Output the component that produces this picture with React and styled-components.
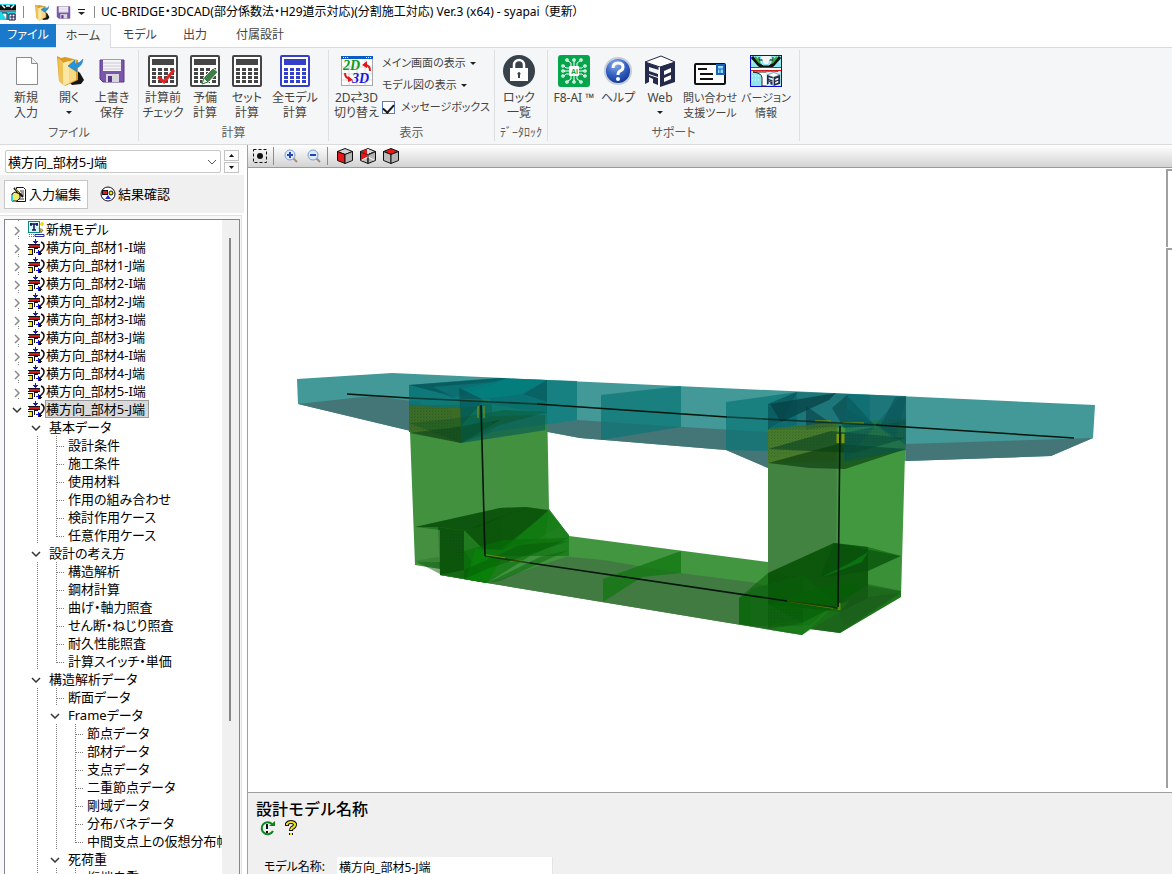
import React from "react";
import styled, { createGlobalStyle, css } from "styled-components";

const Global = createGlobalStyle`
  * { box-sizing: border-box; }
  body {
    margin: 0;
    background: #fff;
    color: #000;
    font-family: "Noto Sans", "Noto Sans CJK JP", sans-serif;
    font-size: 12px;
    line-height: 16px;
    font-feature-settings: "palt";
  }
  button, input, select { font: inherit; color: inherit; font-feature-settings: inherit; }
  svg { display: block; flex: none; }
`;

/* ---------- shell ---------- */
const Shell = styled.div`
  display: flex;
  flex-direction: column;
  height: 100vh;
  overflow: hidden;
`;
const TitleBar = styled.header`
  display: flex;
  align-items: center;
  height: 24px;
  flex: none;
  white-space: nowrap;
`;
const TitleRule = styled.i`
  width: 1px;
  height: 12px;
  background: #8a8a8a;
  margin: 0 6px;
`;
const QuickButton = styled.button`
  display: flex;
  align-items: center;
  justify-content: center;
  width: ${(p) => p.$w || 22}px;
  height: 20px;
  padding: 0;
  border: 0;
  background: none;
`;
const Title = styled.h1`
  margin: 0;
  font-size: 12px;
  font-weight: 400;
`;

/* ---------- ribbon ---------- */
const TabBar = styled.nav`
  display: flex;
  height: 24px;
  flex: none;
  border-bottom: 1px solid #dadbdc;
`;
const Tab = styled.button`
  height: 24px;
  padding: 0 0 2px;
  width: ${(p) => p.$w}px;
  border: 0;
  background: none;
  color: #444;
  ${(p) => p.$kind === "file" && css`
    height: 23px;
    background: #1979ca;
    color: #fff;
  `}
  ${(p) => p.$kind === "active" && css`
    background: #f5f6f7;
    border: solid #dadbdc;
    border-width: 1px 1px 0 0;
  `}
`;
const Ribbon = styled.section`
  display: flex;
  height: 97px;
  flex: none;
  background: #f5f6f7;
  border-bottom: 1px solid #dadbdc;
  color: #444;
`;
const Group = styled.div`
  display: flex;
  flex-direction: column;
  width: ${(p) => p.$w}px;
  margin: 2px 0 3px;
  border-right: 1px solid #dddfe1;
`;
const GroupBody = styled.div`
  display: flex;
  flex: 1;
  padding: 4px 0 0 ${(p) => p.$lead || 3}px;
`;
const GroupName = styled.div`
  height: 16px;
  line-height: 16px;
  text-align: center;
  color: #5c5c5c;
`;
const Tool = styled.button`
  display: flex;
  flex-direction: column;
  align-items: center;
  width: ${(p) => p.$w || 42}px;
  padding: 0;
  border: 0;
  background: none;
  font-size: ${(p) => (p.$compact ? 11 : 12)}px;
  line-height: 15px;
  white-space: nowrap;
`;
const ToolIcon = styled.span`
  display: flex;
  align-items: center;
  height: 34px;
  margin-bottom: 2px;
`;
const Caret = styled.i`
  width: 0;
  height: 0;
  margin-top: ${(p) => p.$top || 0}px;
  border: 3px solid transparent;
  border-top-color: #222;
  border-bottom: 0;
`;
const ViewOptions = styled.div`
  display: flex;
  flex-direction: column;
  padding-left: 2px;
  margin: -2px 0 0;
  font-size: 11px;
`;
const MenuLink = styled.button`
  display: flex;
  align-items: center;
  gap: 4px;
  height: 22px;
  padding: 0;
  border: 0;
  background: none;
  white-space: nowrap;
`;
const CheckLabel = styled.label`
  display: flex;
  align-items: center;
  gap: 6px;
  height: 22px;
  white-space: nowrap;
`;
const Check = styled.input`
  appearance: none;
  width: 13px;
  height: 13px;
  margin: 0;
  border: 1px solid #5a7bb5;
  background: #fff;
  display: grid;
  place-items: center;
  &:checked::after {
    content: "";
    width: 5px;
    height: 9px;
    margin-bottom: 2px;
    border: solid #1a1a1a;
    border-width: 0 2px 2px 0;
    transform: rotate(42deg);
  }
`;

/* ---------- work area ---------- */
const Work = styled.div`
  display: flex;
  flex: 1;
  min-height: 0;
`;
const Side = styled.aside`
  display: flex;
  flex-direction: column;
  width: 247px;
  flex: none;
  padding-right: 3px;
`;
const ModelPicker = styled.div`
  display: flex;
  gap: 3px;
  height: 30px;
  flex: none;
  padding: 5px 5px 2px;
  background: #fcfcfc;
`;
const Combo = styled.label`
  display: flex;
  align-items: center;
  flex: 1;
  border: 1px solid #c8c8c8;
  border-radius: 2px;
  background: #fff;
`;
const ComboSelect = styled.select`
  flex: 1;
  appearance: none;
  border: 0;
  padding: 0 2px;
  background: none;
  font-size: 13px;
  outline: 0;
`;
const Spin = styled.div`
  display: flex;
  flex-direction: column;
  gap: 1px;
  width: 15px;
`;
const SpinButton = styled.button`
  display: grid;
  place-items: center;
  flex: 1;
  padding: 0;
  border: 1px solid #c4c4c4;
  background: #fdfdfd;
`;
const ModeBar = styled.div`
  display: flex;
  height: 38px;
  flex: none;
  padding: 5px 4px 4px;
  gap: 5px;
  background: #f0f0f0;
`;
const Mode = styled.button`
  display: flex;
  align-items: center;
  gap: 2px;
  padding: 0 6px 2px;
  border: 1px solid ${(p) => (p.$on ? "#c6c6c6" : "transparent")};
  background: ${(p) => (p.$on ? "#fff" : "none")};
  font-size: 13px;
`;
const TreeFrame = styled.div`
  flex: 1;
  min-height: 0;
  display: flex;
  margin: 2px 2px 0 0;
  padding: 3px 1px 0 4px;
  border: solid #e0e0e4;
  border-width: 1px 1px 0 0;
  background: #f8f8f8;
`;
const TreeBox = styled.div`
  display: flex;
  flex: 1;
  min-width: 0;
  border: 1px solid #828790;
  border-bottom: 0;
  background: #fff;
`;
const TreeList = styled.ul`
  flex: 1;
  min-width: 0;
  margin: 0;
  padding: 0 0 0 4px;
  overflow: hidden;
  list-style: none;
  font-size: 13px;
`;
const TreeRow = styled.li`
  display: flex;
  align-items: center;
  height: 18px;
  white-space: nowrap;
`;
const Expander = styled.button`
  width: 19px;
  height: 18px;
  flex: none;
  padding: 0;
  border: 0;
  background: none;
`;
const TreeText = styled.span`
  height: 18px;
  line-height: 18px;
  padding-left: 2px;
  ${(p) => p.$root && css`padding-left: 1px;`}
  ${(p) => p.$selected && css`
    line-height: 16px;
    padding: 0 3px 0 0;
    border: 1px solid #999;
    background: #d9d9d9;
  `}
`;
const ScrollTrack = styled.div`
  width: 17px;
  flex: none;
  padding: 18px 8px 0 7px;
  background: #f0f0f0;
`;
const ScrollThumb = styled.div`
  width: 2px;
  height: 76%;
  background: #858585;
`;

const Main = styled.main`
  display: flex;
  flex-direction: column;
  flex: 1;
  min-width: 0;
  border-left: 1px solid #a0a0a0;
`;
const ViewBar = styled.div`
  display: flex;
  align-items: center;
  height: 23px;
  flex: none;
  border-bottom: 1px solid #9a9a9a;
  background: linear-gradient(#fff, #d3d3d3);
`;
const ViewButton = styled.button`
  display: grid;
  place-items: center;
  width: 23px;
  height: 20px;
  padding: 0;
  border: 0;
  background: none;
`;
const BarRule = styled.i`
  width: 1px;
  height: 18px;
  margin: 0 5px 0 2px;
  background: #8c8c8c;
`;
const Stage = styled.div`
  display: flex;
  flex: 1;
  min-height: 0;
`;
const Scene = styled.svg`
  flex: 1;
  min-width: 0;
  height: 100%;
`;
const Dock = styled.div`
  display: flex;
  flex-direction: column;
  gap: 1px;
  width: 6px;
  padding: 1px 0 4px;
`;
const DockPane = styled.div`
  height: ${(p) => p.$h || "auto"};
  flex: ${(p) => (p.$h ? "none" : 1)};
  border: solid #a0a0a0;
  border-width: 2px 0 0 2px;
`;
const Info = styled.section`
  height: 82px;
  flex: none;
  overflow: hidden;
  padding: 5px 8px 0;
  border-top: 1px solid #a0a0a0;
  background: #f0f0f0;
`;
const InfoTitle = styled.h2`
  margin: 0;
  font-size: 16px;
  line-height: 20px;
  font-weight: 500;
  font-family: "Noto Sans CJK JP", sans-serif;
  font-feature-settings: normal;
`;
const InfoTools = styled.div`
  display: flex;
  gap: 8px;
  padding: 2px 3px 0;
`;
const InfoButton = styled.button`
  padding: 0;
  border: 0;
  background: none;
`;
const Field = styled.div`
  display: flex;
  align-items: center;
  gap: 12px;
  margin: 20px 0 0 8px;
`;
const FieldInput = styled.input`
  width: 216px;
  height: 20px;
  padding: 0 2px;
  border: 0;
  border-right: 1px solid #e3e3e3;
  background: #fff;
`;

/* ---------- ribbon icons ---------- */
const PageIcon = () => (
  <svg width="32" height="32" viewBox="0 0 32 32">
    <path d="M6.500 2.500h15l6 6v21h-21z" fill="#fff" stroke="#8b8b8b" />
    <path d="M21.500 2.500v6h6" fill="#eee" stroke="#8b8b8b" />
  </svg>
);
const FolderIcon = ({ size = 32 }) => (
  <svg width={size} height={size} viewBox="0 0 32 32">
    <path d="M20 12l7 6 4 7-3 4-9 1-4-4z" fill="#151515" />
    <path d="M4 1l4 2 4-1 13 3v20l-13 6-6-5z" fill="#d99b25" />
    <path d="M5 3l5 4v23l-4-4z" fill="#eec257" />
    <path d="M10 8l13-4v21l-13 6z" fill="#f7d981" />
    <path d="M10 8l6-2v22l-6 3z" fill="#fbe7a4" />
    <path d="M30 4q-1 8-7 9l1 4-9-6 7-6v4q5-1 8-5z" fill="#2793d8" stroke="#1873b0" strokeWidth=".5" />
  </svg>
);
const DiskIcon = ({ size = 32 }) => (
  <svg width={size} height={size} viewBox="0 0 32 32">
    <path d="M4 5h24v22H7l-3-3z" fill="#7b56ab" stroke="#59398a" />
    <path d="M7 5h18v11H7z" fill="#f4f4f6" />
    <path d="M7 8h18M7 11h18M7 14h18" stroke="#c9c9d2" />
    <path d="M10 19h13v8H10z" fill="#d6d6dc" />
    <path d="M12 21h4v6h-4z" fill="#59398a" />
  </svg>
);
const CalcIcon = ({ color = "#454545", mark }) => {
  const keys = [];
  for (let r = 0; r < 4; r += 1)
    for (let c = 0; c < 4; c += 1)
      keys.push(<rect key={`${r}${c}`} x={5 + c * 6} y={13 + r * 4} width="4" height="3" fill={color} />);
  return (
    <svg width="32" height="32" viewBox="0 0 32 32">
      <rect x="2" y="1" width="28" height="30" rx="1" fill="#fff" stroke={color} strokeWidth="2" />
      <rect x="5" y="4" width="22" height="6" fill={color} />
      {keys}
      {mark === "check" && <path d="M11 22l6 5 10-12" fill="none" stroke="#e32224" strokeWidth="3" />}
      {mark === "pencil" && (
        <g>
          <path d="M13 29l2-7 9-9 5 4-9 10z" fill="#3d7d46" stroke="#fff" />
          <path d="M13 29l2-6 4 4z" fill="#f0f0e8" stroke="#3d7d46" />
        </g>
      )}
    </svg>
  );
};
const SwitchIcon = () => (
  <svg width="32" height="32" viewBox="0 0 32 32">
    <rect x="0.500" y="1.500" width="31" height="29" fill="#fff" stroke="#a8a8a8" />
    <path d="M8 5v25M16 5v25M24 5v25M1 12h30M1 19h30M1 25h30" stroke="#d8d8d8" />
    <rect x="0" y="1" width="32" height="3" fill="#0a5bc4" />
    <path d="M2 2.500h5M25 2.500h5" stroke="#fff" strokeDasharray="1 1" />
    <text x="2" y="15" fontFamily="Liberation Serif" fontStyle="italic" fontWeight="700" fontSize="14" fill="#0d9a1c">2D</text>
    <text x="11" y="28" fontFamily="Liberation Serif" fontStyle="italic" fontWeight="700" fontSize="14" fill="#1717e0">3D</text>
    <path d="M29 16q0-6-5-6M4 18q0 5 5 6" fill="none" stroke="#e01818" strokeWidth="2" />
    <path d="M21 10l5-4v7zM12 25l-5 2v-6z" fill="#e01818" />
  </svg>
);
const LockIcon = () => (
  <svg width="32" height="32" viewBox="0 0 32 32">
    <circle cx="16" cy="16" r="16" fill="#37424a" />
    <path d="M11 14v-4a5 5 0 0 1 10 0v4" fill="none" stroke="#fff" strokeWidth="2.500" />
    <rect x="7" y="13" width="18" height="13" fill="#fff" />
    <path d="M16 17a2 2 0 0 1 1 3v3h-2v-3a2 2 0 0 1 1-3z" fill="#37424a" />
  </svg>
);
const AiIcon = () => (
  <svg width="32" height="32" viewBox="0 0 32 32">
    <rect width="32" height="32" rx="3" fill="#04a54b" />
    <path d="M13 11V8l-3-2M16 11V6M19 11V8l3-2M13 21v3l-3 2M16 21v5M19 21v3l3 2M11 13H8l-2-2M11 16H6M11 19H8l-2 2M21 13h3l2-2M21 16h5M21 19h3l2 2" fill="none" stroke="#fff" />
    <g fill="none" stroke="#fff" strokeWidth="1.200">
      <circle cx="9" cy="5" r="1.200" /><circle cx="16" cy="5" r="1.200" /><circle cx="23" cy="5" r="1.200" />
      <circle cx="9" cy="27" r="1.200" /><circle cx="16" cy="27" r="1.200" /><circle cx="23" cy="27" r="1.200" />
      <circle cx="5" cy="11" r="1.200" /><circle cx="5" cy="16" r="1.200" /><circle cx="5" cy="21" r="1.200" />
      <circle cx="27" cy="11" r="1.200" /><circle cx="27" cy="16" r="1.200" /><circle cx="27" cy="21" r="1.200" />
    </g>
    <rect x="11" y="11" width="10" height="10" rx="1" fill="#fff" />
    <text x="13" y="19" fontFamily="Liberation Sans" fontWeight="700" fontSize="7" fill="#04a54b">AI</text>
  </svg>
);
const HelpIcon = () => (
  <svg width="32" height="32" viewBox="0 0 32 32">
    <defs>
      <radialGradient id="helpBall" cx=".4" cy=".25" r=".8">
        <stop offset="0" stopColor="#8fb0ee" />
        <stop offset=".5" stopColor="#3564c4" />
        <stop offset="1" stopColor="#0d2f8e" />
      </radialGradient>
    </defs>
    <circle cx="16" cy="16" r="13" fill="url(#helpBall)" stroke="#c5ccda" strokeWidth="2" />
    <path d="M11 13q0-5 5-5t5 4q0 3-3 4-2 1-2 4" fill="none" stroke="#fff" strokeWidth="3" />
    <circle cx="16" cy="24" r="2" fill="#fff" />
  </svg>
);
const CubeMark = () => (
  <g>
    <path d="M1 7L17 1l14 6-15 5z" fill="#fff" stroke="#252a4c" />
    <path d="M1 7l14 5v3L5 12v4l9 3v3l-9-3v8l-4 2z" fill="#252a4c" />
    <path d="M5 20l9 3v7l-5-2v-4l-4-2z" fill="#252a4c" />
    <path d="M16 12l15-5v20l-15 5z" fill="#252a4c" />
    <path d="M20 16l7-3v4l-7 3zM20 23l7-3v4l-7 3z" fill="#fff" />
    <path d="M15 12v18" stroke="#fff" />
  </g>
);
const WebIcon = () => (
  <svg width="32" height="32" viewBox="0 0 32 32"><CubeMark /></svg>
);
const CardIcon = () => (
  <svg width="32" height="32" viewBox="0 0 32 32">
    <rect x="1" y="9" width="30" height="20" rx="1" fill="#fff" stroke="#111" strokeWidth="2" />
    <path d="M4 14h9M6 19h13M6 24h13" stroke="#111" strokeWidth="2" />
    <rect x="23" y="10" width="7" height="9" fill="#8fdcff" stroke="#1b5fae" strokeWidth="2" />
    <path d="M23 14h7M26 14v5" stroke="#1b5fae" />
  </svg>
);
const BridgeArt = () => (
  <g>
    <rect x=".5" y=".5" width="31" height="31" fill="#8fe6ee" stroke="#0a0ad8" />
    <path d="M2 3h28M2 7h28M2 17h28M2 21h28M2 25h28" stroke="#fff" strokeDasharray="1 2" />
    <path d="M2 2l7 8 4 2h6l4-2 7-8" fill="none" stroke="#111" strokeWidth="3" />
    <path d="M9 2v6l4 3M23 2v6l-4 3M9 5h14" fill="none" stroke="#111" />
    <path d="M5 2l5 6M27 2l-5 6" stroke="#2fae35" strokeWidth="2" />
    <path d="M11 1h10l-3 8h-4z" fill="#f4f4f4" />
    <path d="M1 12h30v4H1z" fill="#fff" />
    <path d="M1 12.500h30M1 15.500h30" stroke="#d01818" />
    <path d="M3 17q9 1 9 6v8h6v-9q1-4 10-5z" fill="#fff" stroke="#222" />
  </g>
);
const VersionIcon = () => (
  <svg width="32" height="32" viewBox="0 0 32 32">
    <BridgeArt />
    <svg x="16" y="17" width="15" height="14" viewBox="0 0 32 32">
      <rect width="32" height="32" fill="#cfeff5" />
      <CubeMark />
    </svg>
  </svg>
);
const AppIcon = () => (
  <svg width="17" height="17" viewBox="0 0 17 17">
    <rect width="16" height="16" fill="#20d8e8" />
    <path d="M0 1h16v5H0z" fill="#111" />
    <path d="M2 1l3 3M14 1l-3 3M6 2h4" stroke="#fff" strokeWidth="1.500" />
    <path d="M0 7h16" stroke="#d02020" />
    <path d="M2 9h5v7M9 10h6v6H9z" fill="#fff" stroke="#141445" />
    <path d="M10 13h5M12 10v6" stroke="#141445" />
  </svg>
);

/* ---------- side icons ---------- */
const Chevron = ({ open }) => (
  <svg width="19" height="18" viewBox="0 0 19 18">
    {open ? (
      <path d="M4 8l4 4 4-4" fill="none" stroke="#333" strokeWidth="1.500" />
    ) : (
      <g fill="none">
        <path d="M9.500 0v18" stroke="#8a8a8a" strokeDasharray="1 3" />
        <rect x="4" y="3" width="10" height="13" fill="#fff" />
        <path d="M6 7l4 4-4 4" stroke="#8c8c8c" strokeWidth="1.500" />
      </g>
    )}
  </svg>
);
const Guide = ({ arm, last }) => (
  <svg width="19" height="18" viewBox="0 0 19 18">
    <path d={last ? "M9.500 0v11" : "M9.500 0v18"} stroke="#7c7c7c" strokeDasharray="1 1" />
    {arm && <path d="M10 10.500h7" stroke="#7c7c7c" strokeDasharray="1 1" />}
  </svg>
);
const MemberIcon = () => (
  <svg width="17" height="18" viewBox="0 0 17 18" shapeRendering="crispEdges">
    <path d="M0 6h12v1H0zM0 9h12v1H0z" fill="#111" />
    <path d="M1 7h11v2H1z" fill="#d81818" />
    <path d="M1 12h3v4H1z" fill="#f4ea1a" />
    <path d="M0 11h5v1H0zM0 16h5v1H0zM4 12h1v5H4zM6 10h1v5H6zM6 10h4v1H6z" fill="#111" />
    <path d="M7 1h1v5H7zM5 3h5v1H5zM6 4h3v1H6z" fill="#1616b0" />
    <path d="M10 12h1v5h-1zM8 14h5v1H8z" fill="#1616c8" />
    <path d="M13 4q3 1 3 4t-4 6" fill="none" stroke="#111" strokeWidth="1.500" shapeRendering="auto" />
    <path d="M11 13l3 3-3 1z" fill="#111" />
  </svg>
);
const NewModelIcon = () => (
  <svg width="17" height="18" viewBox="0 0 17 18">
    <rect x=".5" y="1.500" width="11" height="11" fill="#d9f6f6" stroke="#0c8585" />
    <path d="M2 4h8M6 4v6M3 3v3M9 3v3M4 10h4" stroke="#10105c" strokeWidth="1.500" />
    <path d="M14 2v4M12 4h4" stroke="#f0df20" strokeWidth="2" />
    <path d="M11 8l4 2-2 3z" fill="#cfc21a" stroke="#333" strokeWidth=".5" />
    <path d="M1 14.500h7M1 16.500h7" stroke="#777" strokeDasharray="1 1" />
    <path d="M7 14.500h9v2H7z" fill="#fff" stroke="#2b2ba0" />
  </svg>
);
const EditIcon = () => (
  <svg width="16" height="16" viewBox="0 0 16 16">
    <path d="M5.500 1.500h7l2 2v12h-9z" fill="#fff" stroke="#111" />
    <path d="M9 5h4M10 7h3M10 9h3M8 13h5" stroke="#333" />
    <path d="M1 8l3-2 5 2v4l-3 3H1z" fill="#f2ea68" stroke="#111" />
    <path d="M0 9h2v6H0z" fill="#26cfe0" />
    <path d="M3 2l9 9" stroke="#111" strokeWidth="2" />
    <path d="M4 2l4 5" stroke="#e0c020" />
  </svg>
);
const ResultIcon = () => (
  <svg width="16" height="16" viewBox="0 0 16 16">
    <circle cx="8" cy="8" r="7" fill="#fff" stroke="#111" />
    <rect x="2.500" y="4.500" width="5" height="4" fill="#e81818" stroke="#111" />
    <circle cx="11" cy="7" r="2" fill="#f2e81c" stroke="#111" />
    <path d="M8 9l3 4H5z" fill="#1c2ce0" />
  </svg>
);

/* ---------- view bar icons ---------- */
const FitIcon = () => (
  <svg width="16" height="16" viewBox="0 0 16 16">
    <rect x="1.500" y="1.500" width="13" height="13" fill="none" stroke="#111" strokeDasharray="3 2" />
    <circle cx="8" cy="8" r="3" fill="#111" />
  </svg>
);
const ZoomIcon = ({ plus }) => (
  <svg width="16" height="16" viewBox="0 0 16 16">
    <path d="M10 10l4 4" stroke="#a78c77" strokeWidth="2" />
    <circle cx="7" cy="7" r="5" fill="#dcecff" stroke="#7f9ed0" />
    <path d={plus ? "M4 7h6M7 4v6" : "M4 7h6"} stroke="#2c42b0" strokeWidth="2" />
  </svg>
);
const CubeIcon = ({ face }) => (
  <svg width="18" height="18" viewBox="0 0 18 18">
    <g stroke="#111" strokeLinejoin="round">
      <path d="M1.500 4.500L9 1.500l7.500 3L9 7.500z" fill={face === "top" ? "#e81616" : "#d4d4d4"} />
      <path d="M1.500 4.500L9 7.500v9l-7.500-3z" fill={face === "left" ? "#e81616" : "#bdbdbd"} />
      <path d="M16.500 4.500L9 7.500v9l7.500-3z" fill="#b4b4b4" />
    </g>
    {face === "inner" && (
      <g>
        <path d="M2 5l6-3v8l-6 3z" fill="#e81616" />
        <path d="M9 2v8l6 3M9 10l-6 3" stroke="#fff" fill="none" />
        <path d="M9 7v9M2 5l7 3 7-3" stroke="#333" fill="none" />
      </g>
    )}
  </svg>
);

/* ---------- bridge scene ---------- */
const shapes = [
  // deck body
  ["297,379 392,373 1095,405 1093,438 1051,456 906,461 835,468 768,468 726,450 580,438 548,432 461,443 298,404", "#439898"],
  ["298,404 372,396 420,402 461,443", "#447577"],
  ["906,444 1093,438 1051,456 906,461", "#447577"],
  ["492,431 577,420 683,427 768,432 768,468 726,450 580,438 548,432", "#447577"],
  ["601,395 681,386 681,427 601,440", "#0b7676", 0.72],
  ["726,402 797,392 797,425 768,432 768,451 726,450", "#0b7676", 0.72],
  // lower beam
  ["549,509 569,536 768,562 768,629 802,635 487,583 440,575 440,560", "#41963f"],
  ["440,560 560,556 603,560 680,573 757,583 802,600 802,635 487,583 440,575", "#417b41"],
  ["603,579 681,551 681,573 642,577 603,602", "#117511", 0.75],
  // left column
  ["409,405 547,402 549,509 569,536 569,556 487,583 440,575 440,569 415,565", "#41913f"],
  ["409,405 461,405 461,443 409,432", "#3d6c27"],
  ["480,403 500,402 502,560 484,553", "#438f41", 0.6],
  // right column
  ["768,429 906,418 901,597 840,633 810,629 802,635 768,626", "#42983f"],
  ["768,429 837,422 836,610 768,626", "#438342"],
  // left joint, deck part
  ["409,385 497,378 577,381 577,420 492,432 461,443 461,408 409,405", "#087878", 0.75],
  ["409,385 497,378 547,380 547,430 461,443 461,408 409,406", "#066d70", 0.4],
  ["409,385 506,378 497,382 433,387 455,397", "#064f53", 0.65],
  ["433,387 506,378 484,388 452,398", "#0a686b", 0.5],
  ["506,379 546,380 520,394 484,400 462,389", "#007f7f", 0.7],
  ["459,388 484,400 461,426", "#044c50", 0.6],
  ["547,380 547,402 523,394", "#07595c", 0.7],
  ["461,402 523,394 547,402 547,414 492,404 461,410", "#04686c", 0.45],
  ["461,430 491,416 545,415 545,430 520,434 461,443", "#125f49", 0.6],
  ["409,423 450,419 505,410 547,412 500,425 461,443", "#074c1c", 0.35],
  ["409,433 450,428 500,420 461,443", "#063d18", 0.5],
  ["461,408 492,404 492,432 461,443", "#0c6047", 0.45],
  // right joint, deck part
  ["768,404 797,392 906,396 906,425 768,430", "#066166", 0.62],
  ["768,404 797,392 783,420 768,429", "#073f43", 0.3],
  ["770,404 836,393 829,400 781,422", "#063e43", 0.7],
  ["806,406 835,426 806,430", "#074044", 0.6],
  ["832,408 847,395 875,426 844,428", "#05474a", 0.6],
  ["845,409 875,425 900,397 906,399 895,440 876,425 845,461", "#056266", 0.5],
  ["847,394 870,395 870,423 847,410", "#066a6e", 0.5],
  ["895,397 906,396 906,445 880,427", "#094c50", 0.5],
  ["768,429 837,422 837,461 768,463", "#4b7421", 0.65],
  ["768,449 831,431 906,438 855,453", "#073f20", 0.6],
  ["768,463 838,444 906,449 845,469 810,468", "#073c0c", 0.65],
  ["844,433 906,420 906,450 844,462", "#085251", 0.58],
  // left joint, beam part
  ["415,527 500,508 526,507 549,511 569,535 569,556 503,556 487,583 440,575 440,530", "#086c08", 0.6],
  ["415,527 500,508 526,507 480,526 464,531 440,527", "#064207", 0.65],
  ["465,531 526,507 549,510 503,550 483,549", "#034403", 0.65],
  ["438,527 464,531 464,570 440,575", "#033c03", 0.62],
  ["549,511 500,550 540,538 561,525", "#0b7a0b", 0.7],
  ["549,511 561,525 569,535 569,556 552,556 545,535", "#1e821e", 0.6],
  ["415,561 465,552 487,583 440,574", "#0c570c", 0.5],
  ["464,551 503,540 569,538 530,556 487,583 464,579", "#057005", 0.6],
  ["476,548 500,560 487,583 466,579", "#078707", 0.65],
  ["487,583 540,557 569,550 500,581", "#0a660a", 0.5],
  ["464,570 520,545 569,541 490,568 464,579", "#064f06", 0.35],
  ["415,527 440,530 440,562 415,562", "#478e43", 0.6],
  // right joint, beam part
  ["739,598 768,573 834,543 868,547 901,556 901,597 840,633 810,629 802,635 739,624", "#096309", 0.6],
  ["768,573 834,543 868,547 868,598 840,612 768,604", "#044804", 0.62],
  ["768,575 803,577 803,625 768,628", "#075307", 0.5],
  ["834,543 901,556 868,571 820,578", "#074f0b", 0.6],
  ["868,571 901,556 901,591 868,586", "#40963c", 0.8],
  ["751,589 803,575 835,603 810,625 751,626", "#086308", 0.45],
  ["739,598 751,591 751,626 739,624", "#0a670a", 0.7],
  ["768,604 836,583 868,586 803,623", "#046004", 0.55],
  ["810,629 840,600 901,593 840,633", "#164f17", 0.45],
  ["836,606 868,584 901,591 845,627", "#1b5b1b", 0.5],
  ["802,635 840,612 850,600 803,622 770,630", "#178017", 0.4],
  ["850,563 868,552 862,562 820,578", "#0b7b12", 0.8],
];
const grains = [
  ["409,405 450,408 461,443 409,428", 0.3],
  ["768,429 837,422 837,440 768,460", 0.25],
  ["845,425 906,418 906,440 845,445", 0.25],
  ["440,530 464,531 464,565 446,545", 0.25],
  ["768,608 803,610 803,628 768,622", 0.25],
];
const BridgeScene = () => (
  <Scene viewBox="248 168 918 624" role="img" aria-label="3D">
    <defs>
      <pattern id="grain" width="3" height="3" patternUnits="userSpaceOnUse">
        <rect width="1" height="1" fill="#0c3b1c" />
        <rect x="1" y="2" width="1" height="1" fill="#0c5b3c" />
      </pattern>
    </defs>
    {shapes.map(([points, fill, opacity = 1], i) => (
      <polygon key={i} points={points} fill={fill} fillOpacity={opacity} />
    ))}
    {grains.map(([points, opacity]) => (
      <polygon key={points} points={points} fill="url(#grain)" opacity={opacity} />
    ))}
    <g fill="none" stroke="#8c9a00" strokeWidth="1.500" opacity=".7">
      <path d="M478 406v12M484 406v12M485 555l20 3M510 561h12M815 421h16M842 423h22M787 601l46 7" />
      <path d="M460 400h30" opacity=".4" />
      <path d="M838 434v9M843 434v9" stroke="#a8b400" strokeWidth="3" />
      <path d="M839 603v7" strokeWidth="3" />
    </g>
    <g fill="none" stroke="#04160c" strokeWidth="1.600">
      <path d="M347 394l62 4M537 404l190 13M876 425l198 13" />
      <path d="M409 398l128 6M727 417l149 8" strokeOpacity=".6" />
      <path d="M481 405l4 151M840 426l-2 181" />
      <path d="M485 556l45 7M787 601l51 7" strokeOpacity=".6" />
      <path d="M530 563l257 38" />
    </g>
  </Scene>
);

/* ---------- data ---------- */
const member = (n, side) => ({ t: `横方向_部材${n}-${side}端`, d: 0 });
const tree = [
  { t: "新規モデル", d: 0, fresh: true },
  ...[1, 2, 3, 4, 5].flatMap((n) => [member(n, "I"), member(n, "J")]),
  { t: "基本データ", d: 1 },
  ...["設計条件", "施工条件", "使用材料", "作用の組み合わせ", "検討作用ケース", "任意作用ケース"].map((t) => ({ t, d: 2 })),
  { t: "設計の考え方", d: 1 },
  ...["構造解析", "鋼材計算", "曲げ・軸力照査", "せん断・ねじり照査", "耐久性能照査", "計算スイッチ・単価"].map((t) => ({ t, d: 2 })),
  { t: "構造解析データ", d: 1 },
  { t: "断面データ", d: 2 },
  { t: "Frameデータ", d: 2, open: true },
  ...["節点データ", "部材データ", "支点データ", "二重節点データ", "剛域データ", "分布バネデータ", "中間支点上の仮想分布幅"].map((t) => ({ t, d: 3 })),
  { t: "死荷重", d: 2, open: true },
  { t: "桁端自重", d: 3 },
];

const TreeItem = ({ item, next }) => {
  const { t, d, fresh, open } = item;
  const selected = t === "横方向_部材5-J端";
  const expandable = d < 2 || open;
  const cells = [];
  for (let i = 0; i < d; i += 1)
    cells.push(i === 0 ? <Expander as="span" key={i} /> : <Guide key={i} />);
  return (
    <TreeRow>
      {cells}
      {expandable ? (
        <Expander aria-label={t}><Chevron open={d > 0 || selected} /></Expander>
      ) : (
        <Guide arm last={!next || next.d < d} />
      )}
      {d === 0 && (fresh ? <NewModelIcon /> : <MemberIcon />)}
      <TreeText $root={d === 0} $selected={selected}>{t}</TreeText>
    </TreeRow>
  );
};

const RibbonTool = ({ icon, lines, w, caret, compact }) => (
  <Tool $w={w} $compact={compact}>
    <ToolIcon>{icon}</ToolIcon>
    {lines.map((line) => <span key={line}>{line}</span>)}
    {caret && <Caret $top={6} />}
  </Tool>
);

export default function App() {
  return (
    <Shell>
      <Global />
      <TitleBar>
        <AppIcon />
        <TitleRule />
        <QuickButton aria-label="開く"><FolderIcon size={17} /></QuickButton>
        <QuickButton aria-label="保存"><DiskIcon size={17} /></QuickButton>
        <QuickButton $w={14} aria-label="その他">
          <svg width="7" height="7" viewBox="0 0 7 7"><path d="M0 .5h7" stroke="#222" /><path d="M0 3h7L3.500 6z" fill="#222" /></svg>
        </QuickButton>
        <TitleRule />
        <Title>UC-BRIDGE・3DCAD(部分係数法・H29道示対応)(分割施工対応) Ver.3 (x64) - syapai （更新）</Title>
      </TitleBar>
      <TabBar>
        <Tab $w={56} $kind="file">ファイル</Tab>
        <Tab $w={55} $kind="active">ホーム</Tab>
        <Tab $w={58}>モデル</Tab>
        <Tab $w={52}>出力</Tab>
        <Tab $w={78}>付属設計</Tab>
      </TabBar>
      <Ribbon>
        <Group $w={139}>
          <GroupBody $lead={5}>
            <RibbonTool icon={<PageIcon />} lines={["新規", "入力"]} />
            <RibbonTool icon={<FolderIcon />} lines={["開く"]} w={44} caret />
            <RibbonTool icon={<DiskIcon />} lines={["上書き", "保存"]} />
          </GroupBody>
          <GroupName>ファイル</GroupName>
        </Group>
        <Group $w={190}>
          <GroupBody>
            <RibbonTool icon={<CalcIcon mark="check" />} lines={["計算前", "チェック"]} />
            <RibbonTool icon={<CalcIcon mark="pencil" />} lines={["予備", "計算"]} />
            <RibbonTool icon={<CalcIcon />} lines={["セット", "計算"]} />
            <RibbonTool icon={<CalcIcon color="#3440c8" />} lines={["全モデル", "計算"]} w={54} />
          </GroupBody>
          <GroupName>計算</GroupName>
        </Group>
        <Group $w={166}>
          <GroupBody $lead={4}>
            <RibbonTool icon={<SwitchIcon />} lines={["2D⇄3D", "切り替え"]} w={47} />
            <ViewOptions>
              <MenuLink>メイン画面の表示<Caret /></MenuLink>
              <MenuLink>モデル図の表示<Caret /></MenuLink>
              <CheckLabel><Check type="checkbox" defaultChecked />メッセージボックス</CheckLabel>
            </ViewOptions>
          </GroupBody>
          <GroupName>表示</GroupName>
        </Group>
        <Group $w={53}>
          <GroupBody>
            <RibbonTool icon={<LockIcon />} lines={["ロック", "一覧"]} />
          </GroupBody>
          <GroupName>ﾃﾞｰﾀﾛｯｸ</GroupName>
        </Group>
        <Group $w={252}>
          <GroupBody>
            <RibbonTool icon={<AiIcon />} lines={["F8-AI ™"]} w={46} />
            <RibbonTool icon={<HelpIcon />} lines={["ヘルプ"]} />
            <RibbonTool icon={<WebIcon />} lines={["Web"]} caret />
            <RibbonTool icon={<CardIcon />} lines={["問い合わせ", "支援ツール"]} w={58} compact />
            <RibbonTool icon={<VersionIcon />} lines={["バージョン", "情報"]} w={54} compact />
          </GroupBody>
          <GroupName>サポート</GroupName>
        </Group>
      </Ribbon>
      <Work>
        <Side>
          <ModelPicker>
            <Combo>
              <ComboSelect aria-label="モデル" defaultValue="横方向_部材5-J端">
                {tree.slice(0, 11).map(({ t }) => <option key={t}>{t}</option>)}
              </ComboSelect>
              <svg width="16" height="16" viewBox="0 0 16 16"><path d="M4 6l4 4 4-4" fill="none" stroke="#555" /></svg>
            </Combo>
            <Spin>
              <SpinButton aria-label="前へ"><svg width="5" height="3"><path d="M0 3h5L2.500 0z" fill="#111" /></svg></SpinButton>
              <SpinButton aria-label="次へ"><svg width="5" height="3"><path d="M0 0h5L2.500 3z" fill="#111" /></svg></SpinButton>
            </Spin>
          </ModelPicker>
          <ModeBar>
            <Mode $on><EditIcon />入力編集</Mode>
            <Mode><ResultIcon />結果確認</Mode>
          </ModeBar>
          <TreeFrame>
            <TreeBox>
              <TreeList>
                {tree.map((item, i) => <TreeItem key={item.t} item={item} next={tree[i + 1]} />)}
              </TreeList>
              <ScrollTrack><ScrollThumb /></ScrollTrack>
            </TreeBox>
          </TreeFrame>
        </Side>
        <Main>
          <ViewBar>
            <ViewButton aria-label="全体表示"><FitIcon /></ViewButton>
            <BarRule />
            <ViewButton aria-label="拡大"><ZoomIcon plus /></ViewButton>
            <ViewButton aria-label="縮小"><ZoomIcon /></ViewButton>
            <BarRule />
            <ViewButton aria-label="側面"><CubeIcon face="left" /></ViewButton>
            <ViewButton aria-label="内面"><CubeIcon face="inner" /></ViewButton>
            <ViewButton aria-label="上面"><CubeIcon face="top" /></ViewButton>
          </ViewBar>
          <Stage>
            <BridgeScene />
            <Dock>
              <DockPane $h="78px" />
              <DockPane />
            </Dock>
          </Stage>
          <Info>
            <InfoTitle>設計モデル名称</InfoTitle>
            <InfoTools>
              <InfoButton aria-label="更新">
                <svg width="17" height="17" viewBox="0 0 17 17">
                  <path d="M13 4a6 6 0 1 0 1 7" fill="none" stroke="#0b8420" strokeWidth="2" />
                  <path d="M10 6h6V1z" fill="#0b8420" />
                  <path d="M8 4v5M8 11v2" stroke="#111" strokeWidth="2" />
                </svg>
              </InfoButton>
              <InfoButton aria-label="ヘルプ">
                <svg width="14" height="17" viewBox="0 0 14 17">
                  <path d="M3 6V4q1-2 4-2t4 2q0 3-3 4-1 1-1 3M7 13v2" fill="none" stroke="#111" strokeWidth="4" />
                  <path d="M3 5V4q1-2 4-2t4 2q0 3-3 4-1 1-1 2M7 13v2" fill="none" stroke="#f4e41c" strokeWidth="2" />
                </svg>
              </InfoButton>
            </InfoTools>
            <Field>
              <label htmlFor="model-name">モデル名称:</label>
              <FieldInput id="model-name" defaultValue="横方向_部材5-J端" />
            </Field>
          </Info>
        </Main>
      </Work>
    </Shell>
  );
}
